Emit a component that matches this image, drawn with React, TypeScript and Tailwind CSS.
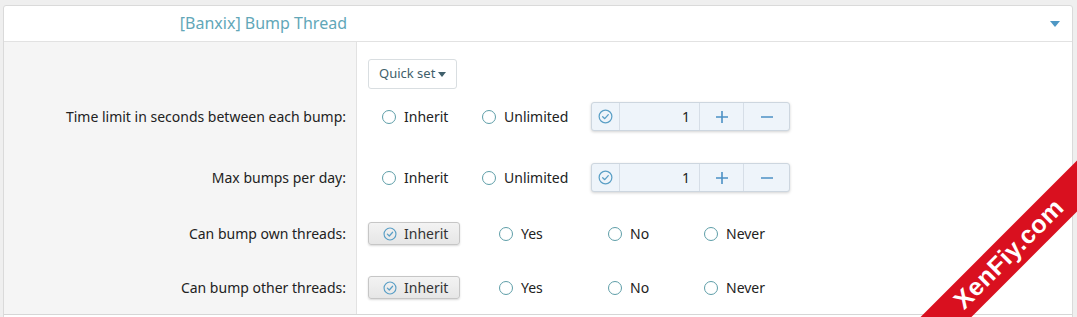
import React from 'react';

const font = { fontFamily: '"Noto Sans", "Open Sans", Arial, sans-serif' };

const Radio: React.FC<{ label: string; width: string }> = ({ label, width }) => (
    <label className={`flex items-center gap-[8px] ${width}`}>
        <span className="w-[14px] h-[14px] rounded-full border border-[#5e9ea8] bg-white shrink-0" />
        <span className="text-[14px] text-[#222]">{label}</span>
    </label>
);

const CheckCircle: React.FC<{ size?: number; color?: string }> = ({ size = 14, color = '#5a9fc6' }) => (
    <svg width={size} height={size} viewBox="0 0 16 16" fill="none">
        <circle cx="8" cy="8" r="6.8" stroke={color} strokeWidth="1.3" />
        <path d="M5 8.2 7.2 10.3 11 6" stroke={color} strokeWidth="1.4" strokeLinecap="round" strokeLinejoin="round" />
    </svg>
);

const NumberBox: React.FC = () => (
    <div className="flex h-[29px] w-[199px] rounded-[3px] border border-[#cdd6df] bg-[#eef4fa] shadow-[0_1px_3px_rgba(0,0,0,0.18)] overflow-hidden">
        <div className="w-[28px] flex items-center justify-center border-r border-[#d6dee7]">
            <CheckCircle size={15} />
        </div>
        <div className="w-[80px] flex items-center justify-end pr-[9px] border-r border-[#d6dee7] text-[14px] text-[#222]">1</div>
        <div className="w-[44px] flex items-center justify-center border-r border-[#d6dee7]">
            <svg width="14" height="14" viewBox="0 0 14 14">
                <path d="M7 1v12M1 7h12" stroke="#4b90c5" strokeWidth="1.6" />
            </svg>
        </div>
        <div className="flex-1 flex items-center justify-center">
            <svg width="14" height="14" viewBox="0 0 14 14">
                <path d="M1 7h12" stroke="#4b90c5" strokeWidth="1.6" />
            </svg>
        </div>
    </div>
);

const InheritButton: React.FC = () => (
    <div className="w-[92px] h-[23px] flex items-center gap-[7px] pl-[14px] rounded-[3px] border border-[#c6c6c6] bg-gradient-to-b from-[#f3f3f3] to-[#e6e6e6] shadow-[0_1px_2px_rgba(0,0,0,0.15)] mr-[39px]">
        <CheckCircle size={14} />
        <span className="text-[14px] text-[#333]">Inherit</span>
    </div>
);

const Row: React.FC<{ label?: string; pad: string; h: string; children: React.ReactNode }> = ({ label, pad, h, children }) => (
    <div className="flex">
        <div className={`w-[353px] shrink-0 bg-[#f5f5f5] border-r border-[#e2e2e2] pr-[10px] flex justify-end ${pad}`}>
            <div className={`${h} flex items-center text-[14px] text-[#222]`}>{label}</div>
        </div>
        <div className={`flex-1 pl-[11px] ${pad}`}>
            <div className={`${h} flex items-center`}>{children}</div>
        </div>
    </div>
);

export default function App() {
    return (
        <div className="relative w-[1077px] h-[317px] overflow-hidden bg-[#efefef] pt-[5px] pl-[3px] pr-[4px]" style={font}>
            <div className="border border-[#dadada] rounded-t-[3px] bg-white">
                {/* Header */}
                <div className="flex h-[36px] border-b border-[#e2e2e2]">
                    <div className="w-[353px] shrink-0 flex items-center justify-end pr-[10px] pb-[2px] text-[16px] text-[#62a7b8]">
                        [Banxix] Bump Thread
                    </div>
                    <div className="flex-1 flex items-center justify-end pr-[12px]">
                        <svg width="10" height="6" viewBox="0 0 10 6">
                            <path d="M0 0h10L5 6z" fill="#4e97c4" />
                        </svg>
                    </div>
                </div>

                <Row pad="pt-[17px] pb-[7px]" h="h-[30px]">
                    <div className="h-[30px] px-[10px] flex items-center gap-[3px] rounded-[3px] border border-[#d9dee1] bg-white text-[13px] text-[#3f5f6b]">
                        Quick set
                        <svg width="8" height="5" viewBox="0 0 8 5">
                            <path d="M0 0h8L4 5z" fill="#3f5f6b" />
                        </svg>
                    </div>
                </Row>

                <Row label="Time limit in seconds between each bump:" pad="pt-[6px] pb-[26px]" h="h-[29px]">
                    <div className="ml-[14px] flex items-center">
                        <Radio label="Inherit" width="w-[100px]" />
                        <Radio label="Unlimited" width="w-[109px]" />
                        <NumberBox />
                    </div>
                </Row>

                <Row label="Max bumps per day:" pad="pt-[6px] pb-[24px]" h="h-[29px]">
                    <div className="ml-[14px] flex items-center">
                        <Radio label="Inherit" width="w-[100px]" />
                        <Radio label="Unlimited" width="w-[109px]" />
                        <NumberBox />
                    </div>
                </Row>

                <Row label="Can bump own threads:" pad="pt-[6px] pb-[25px]" h="h-[23px]">
                    <InheritButton />
                    <Radio label="Yes" width="w-[109px]" />
                    <Radio label="No" width="w-[96px]" />
                    <Radio label="Never" width="w-[100px]" />
                </Row>

                <Row label="Can bump other threads:" pad="pt-[6px] pb-[15px]" h="h-[23px]">
                    <InheritButton />
                    <Radio label="Yes" width="w-[109px]" />
                    <Radio label="No" width="w-[96px]" />
                    <Radio label="Never" width="w-[100px]" />
                </Row>
                <div className="border-t border-[#d6d6d6] h-[10px]" />
            </div>

            {/* Watermark ribbon */}
            <div className="absolute left-[809px] top-[236px] w-[400px] h-[36px] bg-[#d9101f] -rotate-45 flex items-center justify-center">
                <span className="text-white font-bold text-[25px] tracking-[0.5px]" style={{ fontFamily: '"Liberation Sans", Arial, sans-serif' }}>
                    XenFiy.com
                </span>
            </div>
        </div>
    );
}
